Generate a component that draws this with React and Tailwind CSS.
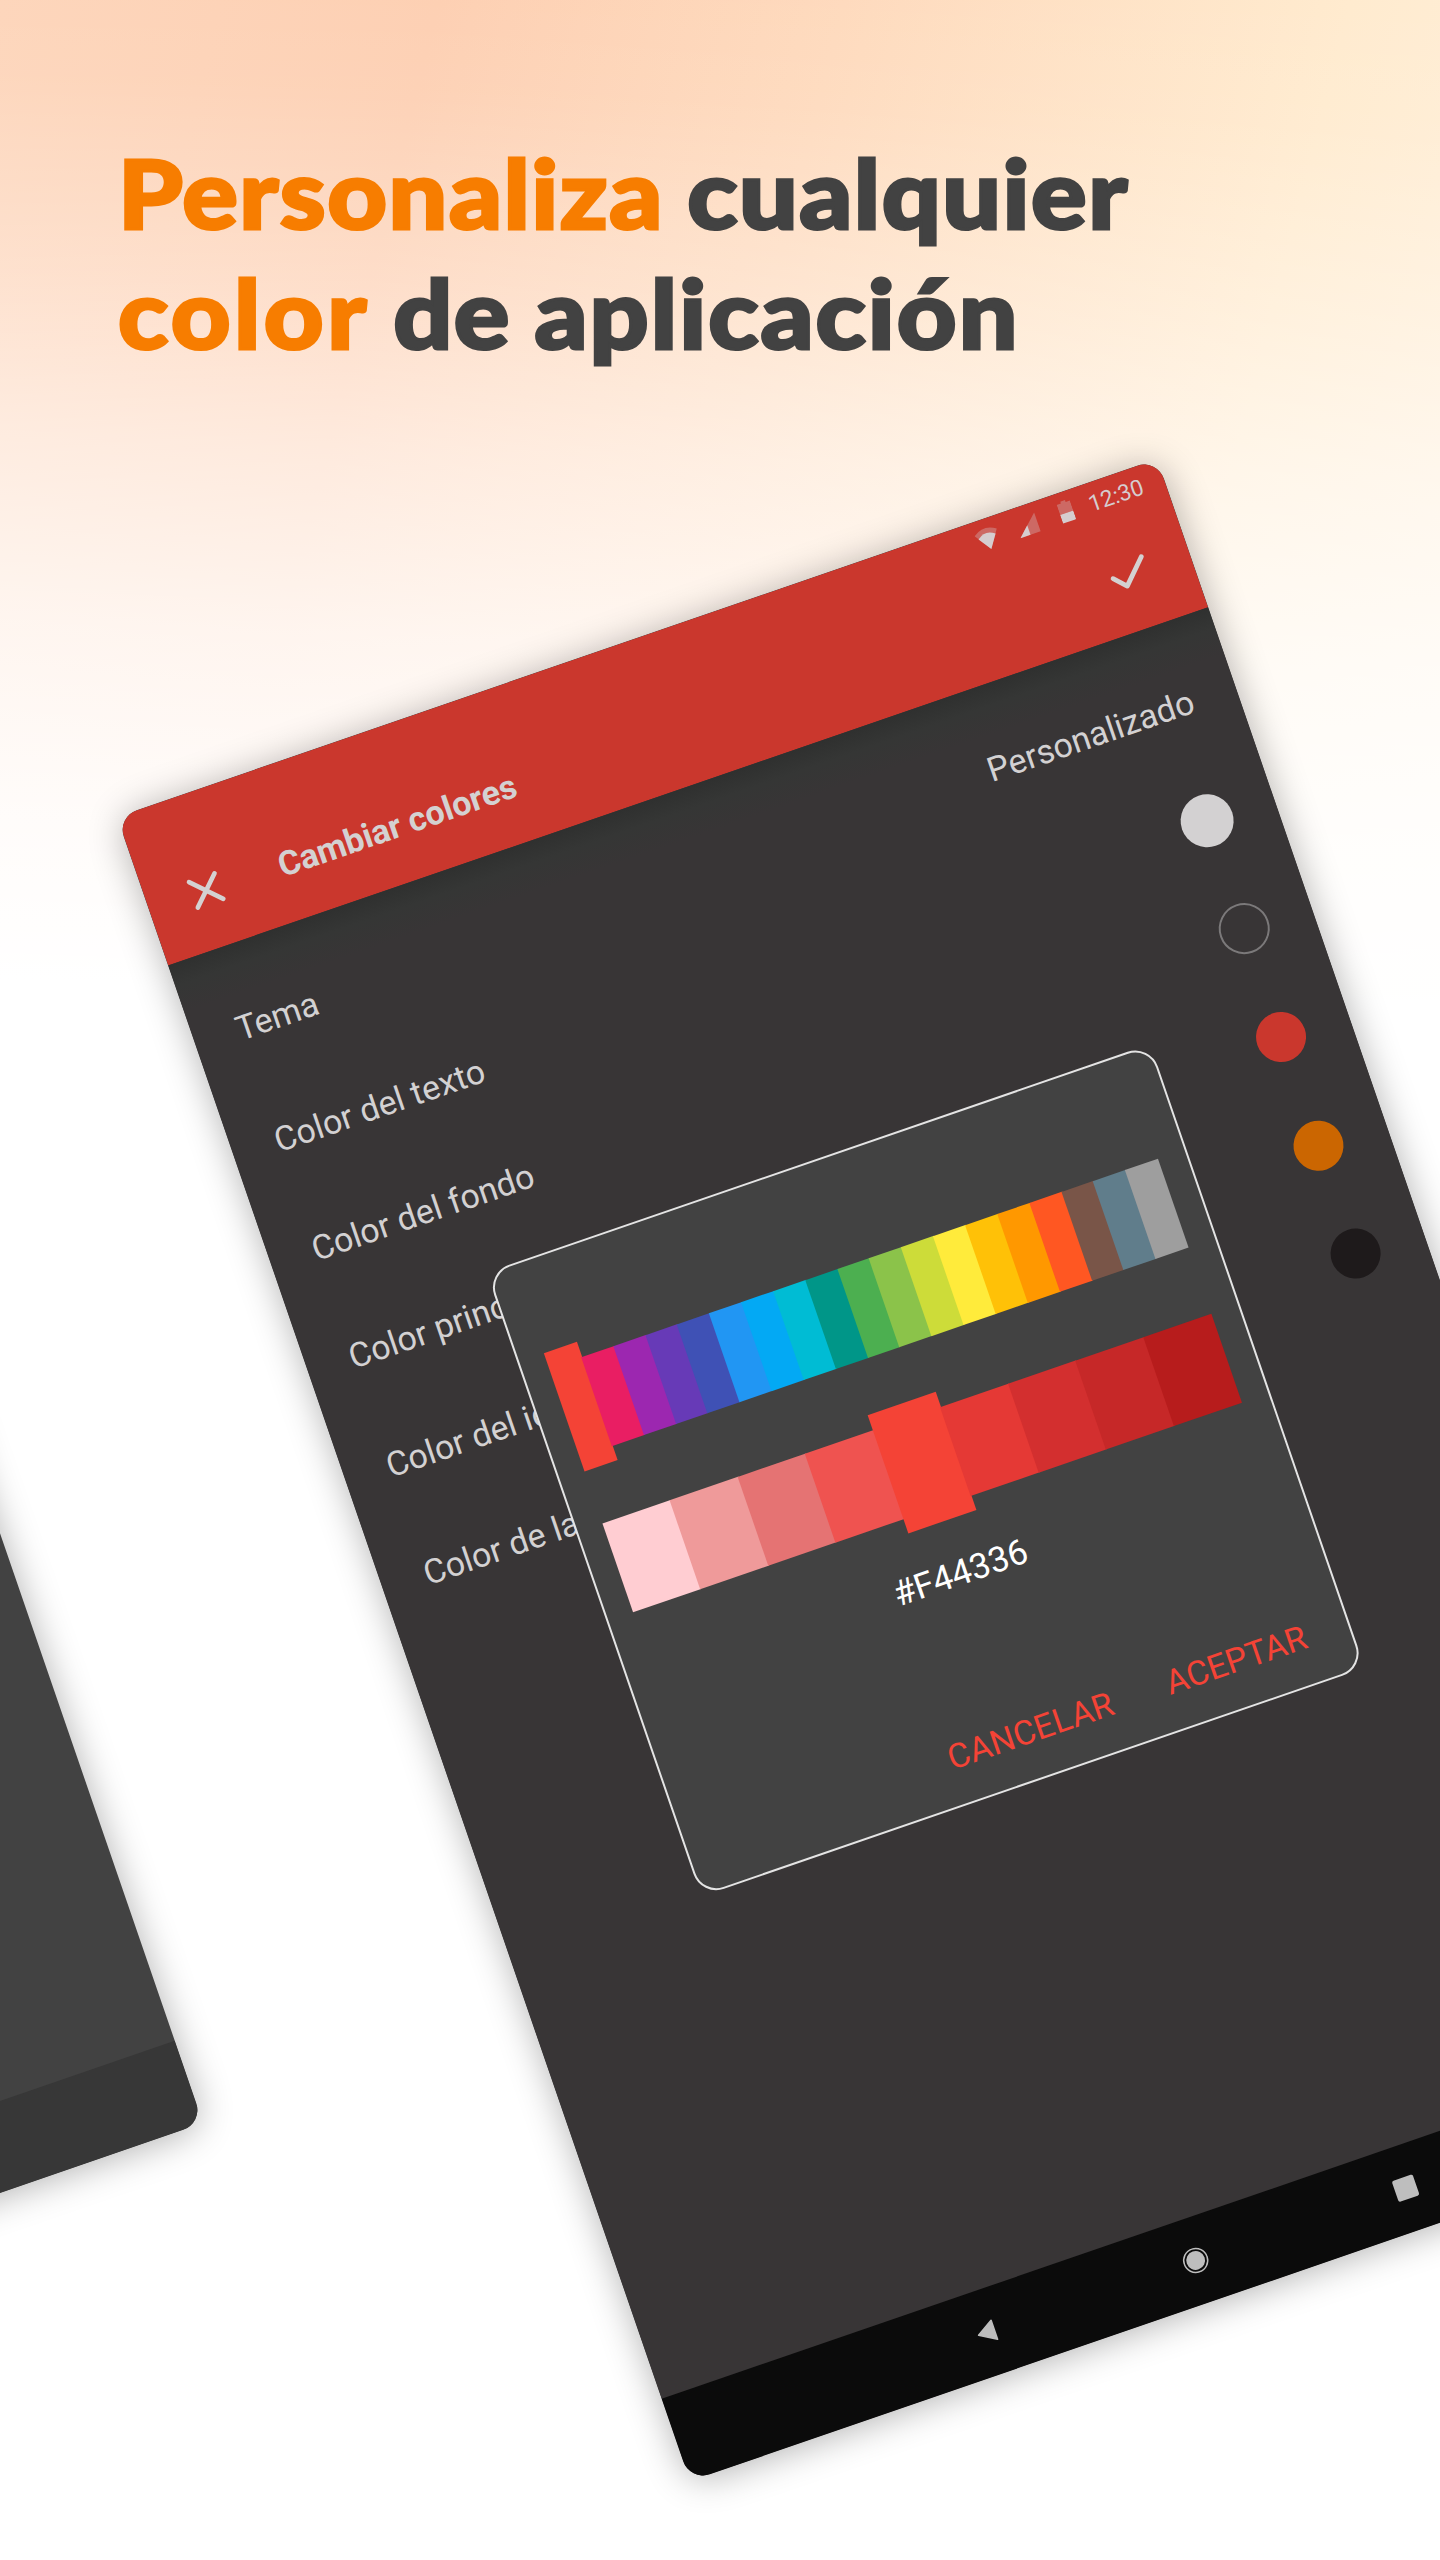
import React from 'react';
import clsx from 'clsx';

const HUES = [
  'bg-[#f44336]', 'bg-[#e91e63]', 'bg-[#9c27b0]', 'bg-[#673ab7]', 'bg-[#3f51b5]',
  'bg-[#2196f3]', 'bg-[#03a9f4]', 'bg-[#00bcd4]', 'bg-[#009688]', 'bg-[#4caf50]',
  'bg-[#8bc34a]', 'bg-[#cddc39]', 'bg-[#ffeb3b]', 'bg-[#ffc107]', 'bg-[#ff9800]',
  'bg-[#ff5722]', 'bg-[#795548]', 'bg-[#607d8b]', 'bg-[#9e9e9e]',
];

const SHADES = [
  'bg-[#ffcdd2]', 'bg-[#ef9a9a]', 'bg-[#e57373]', 'bg-[#ef5350]', 'bg-[#f44336]',
  'bg-[#e53935]', 'bg-[#d32f2f]', 'bg-[#c62828]', 'bg-[#b71c1c]',
];

const ROWS = [
  { label: 'Color del texto', dot: 'size-[53px] bg-[#d3d1d2]' },
  { label: 'Color del fondo', dot: 'size-[51px] border-2 border-[#7b797a]' },
  { label: 'Color principal', dot: 'size-[50px] bg-[#ca372d]' },
  { label: 'Color del icono', dot: 'size-[50px] bg-[#cb6601]' },
  { label: 'Color de la barra', dot: 'size-[50px] bg-[#1e1a1b]' },
];

function Swatches({ colors, selected }) {
  return (
    <div className="flex h-[125.5px] w-[644px] items-center">
      {colors.map((color, i) => (
        <div
          key={color}
          className={clsx('-mr-px flex-1 last:mr-0', color, i === selected ? 'h-full' : 'h-[94px]')}
        />
      ))}
    </div>
  );
}

function StatusBar() {
  return (
    <div className="flex h-[41px] shrink-0 items-center pl-[902px]">
      <svg className="h-7 w-6 shrink-0" viewBox="0 0 24 28">
        <path d="M12 24.3 L0.3 6.7 Q12 -1.6 23.7 6.7 Z" fill="#d3c9cc" fillOpacity="0.35" />
        <path d="M12 24.3 L3 11 Q12 3.8 21 11 Z" fill="#d6cdcf" />
      </svg>
      <svg className="ml-[19px] h-7 w-[22px] shrink-0" viewBox="0 0 22 28">
        <path d="M0 23.6 L21.3 3.6 V23.6 Z" fill="#d3c9cc" fillOpacity="0.35" />
        <path d="M0 23.6 L10.6 13.6 V23.6 Z" fill="#d6cdcf" />
      </svg>
      <svg className="ml-[23px] h-7 w-[14px] shrink-0" viewBox="0 0 14 28">
        <path d="M4.5 2 H9.5 V4 H14 V14.5 H0 V4 H4.5 Z" fill="#d3c9cc" fillOpacity="0.35" />
        <path d="M0 14.5 H14 V22.6 Q14 23.6 13 23.6 H1 Q0 23.6 0 22.6 Z" fill="#d6cdcf" />
      </svg>
      <span className="ml-[17px] pt-[2px] text-[22.7px] leading-7 text-[#d6cdcf]">12:30</span>
    </div>
  );
}

function Toolbar() {
  return (
    <div className="flex flex-1 items-center pr-[44px] pl-[40px]">
      <svg className="size-10" viewBox="0 0 40 40" fill="none" stroke="#d4d1d1" strokeWidth="4.6" strokeLinecap="round">
        <path d="M6.9 6 L33.9 33 M33.9 6 L6.9 33" />
      </svg>
      <h2 className="ml-[57px] flex-1 text-[34px] leading-10 font-bold text-[#d4d1d1]">Cambiar colores</h2>
      <svg
        className="size-10"
        viewBox="0 0 40 40"
        fill="none"
        stroke="#d4d1d1"
        strokeWidth="4.8"
        strokeLinecap="round"
        strokeLinejoin="round"
      >
        <path d="M3.4 20 L14.4 31.6 L37.2 8.4" />
      </svg>
    </div>
  );
}

function NavBar() {
  return (
    <div className="flex h-[87px] shrink-0 items-center justify-center gap-[196px] bg-[#0b0b0b] pb-[2px]">
      <svg className="size-[26px]" viewBox="0 0 26 26">
        <path d="M5.4 13 L22 3 V23 Z" fill="#bebebe" stroke="#bebebe" strokeWidth="1.6" strokeLinejoin="round" />
      </svg>
      <svg className="size-[26px]" viewBox="0 0 26 26">
        <circle cx="13" cy="13" r="9.4" fill="#bebebe" />
        <circle cx="13" cy="13" r="12" fill="none" stroke="#bebebe" strokeWidth="1.5" />
      </svg>
      <svg className="size-[26px]" viewBox="0 0 26 26">
        <rect x="2" y="2" width="22" height="22" rx="2" fill="#bebebe" />
      </svg>
    </div>
  );
}

function ColorDialog() {
  return (
    <div className="absolute top-[550.5px] left-[200.5px] flex h-[660px] w-[702px] flex-col rounded-[24px] border-2 border-[#e4e4e4] bg-[#424242] px-[26.5px] pt-[93.4px]">
      <Swatches colors={HUES} selected={0} />
      <div className="mt-[38.6px]">
        <Swatches colors={SHADES} selected={4} />
      </div>
      <p className="mt-[33.5px] text-center text-[35.2px] leading-10 text-white">#F44336</p>
      <div className="mt-[132.1px] flex justify-end gap-[57px] pr-[17px] text-[34px] leading-10 text-[#f44336]">
        <button className="tracking-[0.2px]">CANCELAR</button>
        <button>ACEPTAR</button>
      </div>
    </div>
  );
}

function SettingsScreen() {
  return (
    <div className="absolute top-[817px] left-[117.4px] flex h-[1760px] w-[1100px] origin-top-left -rotate-[19deg] flex-col overflow-hidden rounded-[21px] bg-[#383536] shadow-[0_3px_36px_rgba(0,0,0,0.3)]">
      <header className="flex h-[157px] shrink-0 flex-col bg-[#ca372d]">
        <StatusBar />
        <Toolbar />
      </header>
      <main className="flex-1 bg-[linear-gradient(#2f302f,#353635_22px,#383536_50px)] pt-[21px] pr-[44.5px] pl-[44px] text-[34px] leading-10 tracking-[0.1px] text-[#d3d1d2]">
        <div className="flex h-[123px] items-center justify-between">
          <span>Tema</span>
          <span>Personalizado</span>
        </div>
        {ROWS.map((row) => (
          <div key={row.label} className="flex h-[114.5px] items-center justify-between">
            <span>{row.label}</span>
            <span className="flex w-[53px] justify-center">
              <span className={clsx('rounded-full', row.dot)} />
            </span>
          </div>
        ))}
      </main>
      <NavBar />
      <ColorDialog />
    </div>
  );
}

function PreviousScreen() {
  return (
    <div className="absolute top-[817px] left-[-1409.6px] flex h-[1760px] w-[1100px] origin-top-left -rotate-[19deg] flex-col overflow-hidden rounded-[21px] bg-[#424242] shadow-[0_3px_36px_rgba(0,0,0,0.3)]">
      <div className="flex-1" />
      <div className="h-[87px] bg-[#373737]" />
    </div>
  );
}

export default function App() {
  return (
    <div className="relative h-[2560px] w-[1440px] overflow-hidden bg-white font-['Roboto',sans-serif]">
      <div className="h-[1000px] bg-[linear-gradient(182deg,rgba(255,255,255,0)_0%,rgba(255,255,255,0.06)_12%,rgba(255,255,255,0.3)_30%,rgba(255,255,255,0.56)_46%,rgba(255,255,255,0.79)_64%,rgba(255,255,255,0.93)_82%,#fff_98%),linear-gradient(104deg,#fdd5ba_0%,#fdcfb2_26%,#fedabd_50%,#ffebcf_80%,#fff0dc_100%)] pt-[132px] pl-[118px]">
        <h1 className="w-max origin-left scale-x-[1.08] font-['Lato',sans-serif] text-[96px] leading-[120px] font-black tracking-[1.4px] text-[#424242] [-webkit-text-stroke:3px_#424242] [word-spacing:-2.5px]">
          <span className="text-[#f77d00] [-webkit-text-stroke-color:#f77d00]">Personaliza</span> cualquier
          <br />
          <span className="tracking-[3.2px] text-[#f77d00] [-webkit-text-stroke-color:#f77d00]">color</span> de{' '}
          <span className="tracking-[1.9px]">aplicación</span>
        </h1>
      </div>
      <PreviousScreen />
      <SettingsScreen />
    </div>
  );
}
